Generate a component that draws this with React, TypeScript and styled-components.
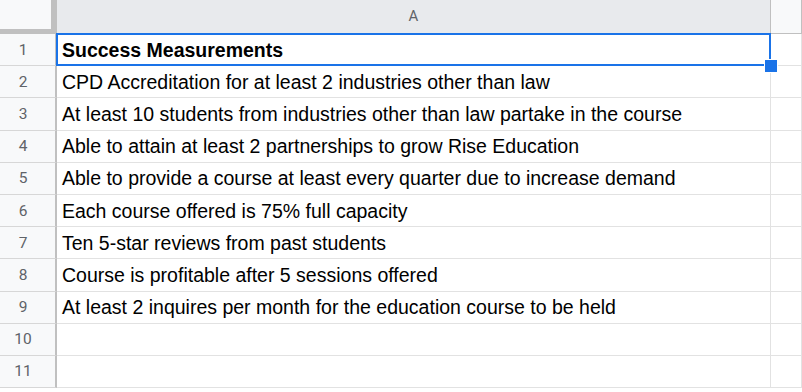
import React from 'react'
import styled, { createGlobalStyle } from 'styled-components'

const GlobalStyle = createGlobalStyle`
    html, body {
        margin: 0;
        padding: 0;
        background: #ffffff;
        overflow: hidden;
    }
`

const Sheet = styled.div`
    display: grid;
    grid-template-columns: 57px 714px 1fr;
    grid-template-rows: 34px;
    grid-auto-rows: 32.2px;
    width: 802px;
    font-family: 'Liberation Sans', Arial, sans-serif;
`

const Corner = styled.div`
    box-sizing: border-box;
    background: #f8f9fa;
    border-right: 6px solid #c0c0c0;
    border-bottom: 5px solid #c0c0c0;
`

const ColHeader = styled.div<{ $selected?: boolean }>`
    box-sizing: border-box;
    display: flex;
    align-items: center;
    justify-content: center;
    background: ${(p) => (p.$selected ? '#e8eaed' : '#f8f9fa')};
    border-right: 1px solid #c0c0c0;
    border-bottom: 1px solid #c0c0c0;
    color: #5f6368;
    font-family: Roboto, 'Liberation Sans', Arial, sans-serif;
    font-size: 15px;
    padding-bottom: 1px;
`

const RowHeader = styled.div`
    box-sizing: border-box;
    display: flex;
    align-items: center;
    justify-content: center;
    padding-right: 9px;
    background: #f8f9fa;
    border-right: 2px solid #c0c0c0;
    border-bottom: 1px solid #d7d7d7;
    color: #5f6368;
    font-family: Roboto, 'Liberation Sans', Arial, sans-serif;
    font-size: 15.5px;
`

const Cell = styled.div<{ $bold?: boolean }>`
    position: relative;
    box-sizing: border-box;
    display: flex;
    align-items: center;
    padding: 1px 5px 0;
    background: #ffffff;
    border-right: 1px solid #e2e2e2;
    border-bottom: 1px solid #e2e2e2;
    color: #000000;
    font-size: 19.5px;
    font-weight: ${(p) => (p.$bold ? 700 : 400)};
    white-space: nowrap;
`

const Selection = styled.div`
    position: absolute;
    z-index: 2;
    left: -1px;
    top: -1px;
    right: -1px;
    bottom: -1px;
    border: 2px solid #1a73e8;
    pointer-events: none;
`

const Handle = styled.div`
    position: absolute;
    right: -9px;
    bottom: -9px;
    width: 12px;
    height: 12px;
    background: #1a73e8;
    border: 1px solid #ffffff;
`

const rows = [
    'Success Measurements',
    'CPD Accreditation for at least 2 industries other than law',
    'At least 10 students from industries other than law partake in the course',
    'Able to attain at least 2 partnerships to grow Rise Education',
    'Able to provide a course at least every quarter due to increase demand',
    'Each course offered is 75% full capacity',
    'Ten 5-star reviews from past students',
    'Course is profitable after 5 sessions offered',
    'At least 2 inquires per month for the education course to be held',
    '',
    '',
]

export default function App() {
    return (
        <>
            <GlobalStyle />
            <Sheet>
                <Corner />
                <ColHeader $selected>A</ColHeader>
                <ColHeader />
                {rows.map((text, i) => (
                    <React.Fragment key={i}>
                        <RowHeader>{i + 1}</RowHeader>
                        <Cell $bold={i === 0}>
                            {text}
                            {i === 0 && (
                                <Selection>
                                    <Handle />
                                </Selection>
                            )}
                        </Cell>
                        <Cell />
                    </React.Fragment>
                ))}
            </Sheet>
        </>
    )
}
